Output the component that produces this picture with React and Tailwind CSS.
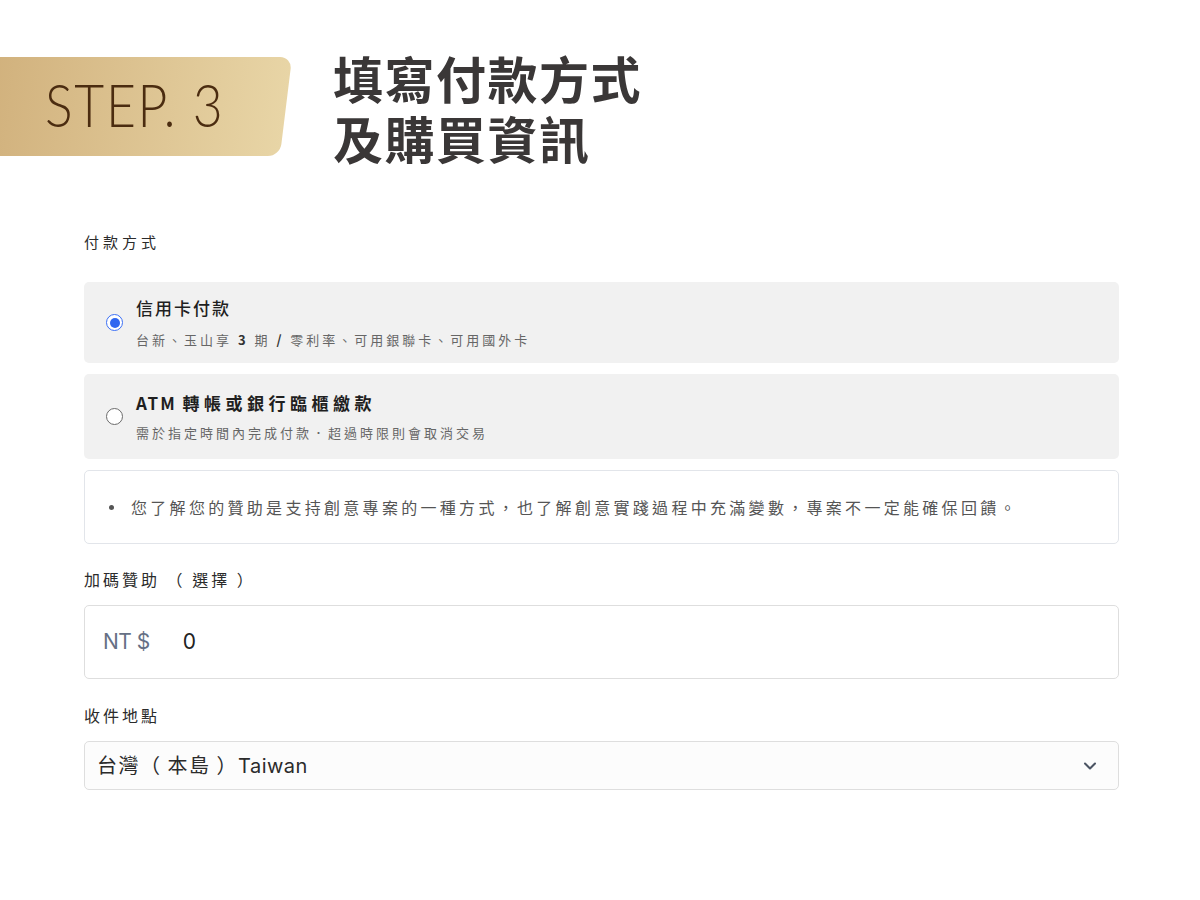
import React, { useState } from 'react';
import { ChevronDown } from 'lucide-react';

const cjk = "font-['Noto_Sans_CJK_TC','Noto_Sans',sans-serif]";

function PayOption({ checked, title, desc, onSelect, className }) {
  return (
    <label
      onClick={onSelect}
      className={`flex items-center gap-[13px] rounded-[5px] bg-[#f1f1f1] pl-[22px] pr-4 cursor-pointer ${className}`}
    >
      <span
        className={
          checked
            ? 'flex h-[17px] w-[17px] shrink-0 items-center justify-center rounded-full border-[1.5px] border-[#3b6ff5] bg-white'
            : 'h-[17px] w-[17px] shrink-0 rounded-full border-[1.5px] border-[#6b6b6b] bg-white'
        }
      >
        {checked && <span className="h-[10px] w-[10px] rounded-full bg-[#2f66f0]" />}
      </span>
      <span className="flex flex-col">
        <span className="text-[17px] font-medium leading-[22px] tracking-[2px] text-[#1f1f1f]">{title}</span>
        {desc}
      </span>
    </label>
  );
}

export default function App() {
  const [method, setMethod] = useState('card');

  return (
    <div className={`min-h-[900px] w-[1200px] bg-white ${cjk}`}>
      {/* heading */}
      <header className="flex items-start pt-[57px]">
        <div className="relative flex h-[99px] w-[292px] items-center overflow-hidden">
          <div className="absolute inset-y-0 -left-[40px] right-[6px] skew-x-[-7deg] rounded-r-[12px] bg-gradient-to-r from-[#cfae79] to-[#e8d5a6]" />
          <span className="relative ml-[45px] -mt-[6px] origin-left scale-x-[0.86] whitespace-nowrap font-['Lato',sans-serif] text-[60px] font-light leading-none tracking-[2px] text-[#4b2c10]">
            STEP.<span className="ml-[18px]">3</span>
          </span>
        </div>
        <div className="ml-[41px] -mt-[10px] text-[50px] font-bold tracking-[1.5px] text-[#3a3737]">
          <h1 className="h-[60px] leading-[60px]">填寫付款方式</h1>
          <div className="h-[60px] leading-[60px]">及購買資訊</div>
        </div>
      </header>

      <main className="ml-[84px] w-[1035px] pt-[64px]">
        <div className="text-[15px] leading-[22px] tracking-[4px] text-[#2b2b2b]">付款方式</div>

        <PayOption
          className="mt-[29px] h-[81px]"
          checked={method === 'card'}
          onSelect={() => setMethod('card')}
          title="信用卡付款"
          desc={
            <span className="mt-[12px] text-[13px] leading-[18px] tracking-[3px] text-[#666]">
              台新、玉山享 <b className="font-semibold text-[#333]">3</b> 期 <b className="font-semibold text-[#333]">/</b> 零利率、可用銀聯卡、可用國外卡
            </span>
          }
        />

        <PayOption
          className="mt-[11px] h-[85px]"
          checked={method === 'atm'}
          onSelect={() => setMethod('atm')}
          title={
            <span className="font-semibold">
              ATM <span className="tracking-[4.5px]">轉帳或銀行臨櫃繳款</span>
            </span>
          }
          desc={
            <span className="mt-[10px] text-[13px] leading-[18px] tracking-[3px] text-[#666]">
              需於指定時間內完成付款．超過時限則會取消交易
            </span>
          }
        />

        <div className="mt-[11px] flex h-[74px] items-center rounded-[5px] border border-[#e2e5ea] pl-[24px]">
          <span className="h-[5px] w-[5px] shrink-0 rounded-full bg-[#555]" />
          <span className="ml-[17px] whitespace-nowrap text-[16px] tracking-[3.3px] text-[#555]">
            您了解您的贊助是支持創意專案的一種方式，也了解創意實踐過程中充滿變數，專案不一定能確保回饋。
          </span>
        </div>

        <div className="mt-[23px] text-[16px] leading-[24px] tracking-[3px] text-[#2b2b2b]">
          加碼贊助 （ 選擇 ）
        </div>

        <div className="mt-[14px] flex h-[74px] items-center rounded-[5px] border border-[#dedede] pl-[18px]">
          <span className="font-['Inter',sans-serif] text-[21px] tracking-[-0.5px] text-[#667085]">NT $</span>
          <span className="ml-[33px] font-['Inter',sans-serif] text-[21px] text-[#222]">0</span>
        </div>

        <div className="mt-[24px] text-[16px] leading-[24px] tracking-[3px] text-[#2b2b2b]">收件地點</div>

        <div className="mt-[14px] flex h-[49px] items-center justify-between rounded-[5px] border border-[#dedede] bg-[#fcfcfc] pl-[12px] pr-[18px]">
          <span className="text-[20px] tracking-[1.5px] text-[#2b2b2b]">
            台灣（ 本島 ）<span className="font-['Inter',sans-serif] tracking-[0.5px]">Taiwan</span>
          </span>
          <ChevronDown size={20} strokeWidth={2.5} className="text-[#4b5563]" />
        </div>
      </main>
    </div>
  );
}
